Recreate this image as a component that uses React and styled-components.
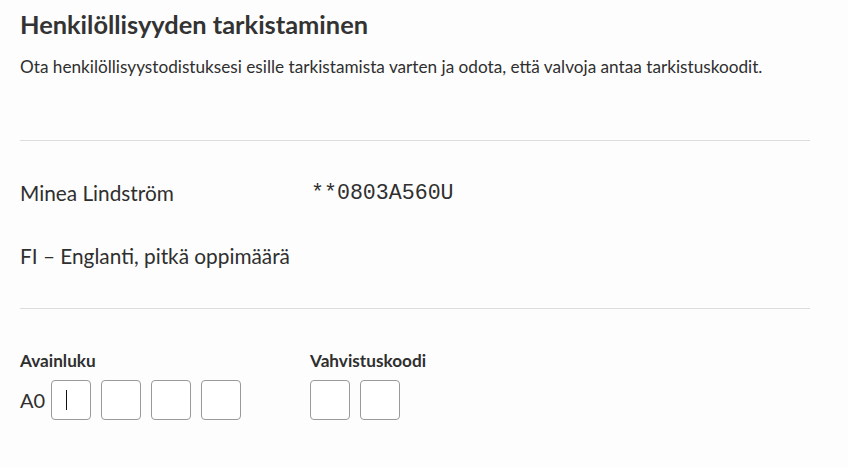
import React from "react";
import styled, { createGlobalStyle } from "styled-components";

const Global = createGlobalStyle`
  html, body { margin: 0; padding: 0; background: #fdfdfd; }
  body { font-family: Lato, "Noto Sans", sans-serif; color: #2f2f2f; }
`;

const Page = styled.main`
  width: 790px;
  padding: 0 20px;
`;

const Title = styled.h1`
  margin: 8px 0 0;
  font-size: 25.4px;
  line-height: 32px;
  font-weight: 700;
  color: #333;
`;

const Lead = styled.p`
  margin: 16px 0 0;
  font-size: 17.2px;
  line-height: 22px;
`;

const Divider = styled.hr`
  margin: ${(p) => p.$top}px 0 0;
  border: 0;
  border-top: 1px solid #dcdcdc;
  height: 0;
`;

const InfoGrid = styled.div`
  display: grid;
  grid-template-columns: 290px 1fr;
  row-gap: 37px;
  margin-top: 39px;
  align-items: center;
`;

const InfoText = styled.div`
  font-size: 20.8px;
  line-height: 26px;
`;

const Mono = styled.div`
  font-family: "Liberation Mono", monospace;
  font-size: 21.6px;
  line-height: 26px;
  padding-left: 1px;
`;

const CodeRow = styled.div`
  display: grid;
  grid-template-columns: 290px 1fr;
  margin-top: 42px;
`;

const Field = styled.div`
  display: flex;
  flex-direction: column;
  gap: 9px;
`;

const Label = styled.div`
  font-size: 17.2px;
  font-weight: 700;
  line-height: 20px;
`;

const Boxes = styled.div`
  display: flex;
  align-items: center;
  gap: 10px;
`;

const Prefix = styled.span`
  font-size: 20px;
  line-height: 40px;
  width: 21px;
  white-space: nowrap;
`;

const Box = styled.div`
  width: 38px;
  height: 38px;
  border: 1px solid #9a9a9a;
  border-radius: 4px;
  background: #fff;
  position: relative;
`;

const Caret = styled.span`
  position: absolute;
  left: 14px;
  top: 9px;
  width: 1px;
  height: 20px;
  background: #111;
`;

export default function App() {
  return (
    <>
      <Global />
      <Page>
        <Title>Henkilöllisyyden tarkistaminen</Title>
        <Lead>
          Ota henkilöllisyystodistuksesi esille tarkistamista varten ja odota, että valvoja antaa tarkistuskoodit.
        </Lead>
        <Divider $top={62} />
        <InfoGrid>
          <InfoText>Minea Lindström</InfoText>
          <Mono>**0803A560U</Mono>
          <InfoText>FI – Englanti, pitkä oppimäärä</InfoText>
          <div />
        </InfoGrid>
        <Divider $top={39} />
        <CodeRow>
          <Field>
            <Label>Avainluku</Label>
            <Boxes>
              <Prefix>A0</Prefix>
              <Box><Caret /></Box>
              <Box />
              <Box />
              <Box />
            </Boxes>
          </Field>
          <Field>
            <Label>Vahvistuskoodi</Label>
            <Boxes>
              <Box />
              <Box />
            </Boxes>
          </Field>
        </CodeRow>
      </Page>
    </>
  );
}
